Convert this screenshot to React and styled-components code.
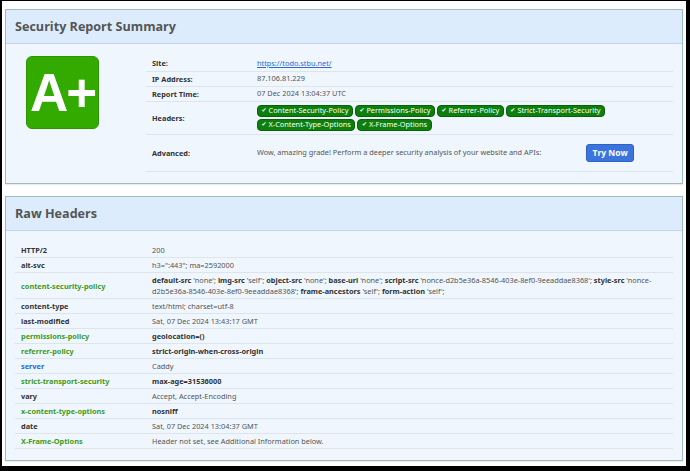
import React from 'react';
import styled, { createGlobalStyle } from 'styled-components';

const GlobalStyle = createGlobalStyle`
  html, body {
    margin: 0;
    padding: 0;
    background: #000;
  }
  * { box-sizing: border-box; }
`;

const Frame = styled.div`
  width: 690px;
  height: 471px;
  background: #fff;
  border-style: solid;
  border-color: #000;
  border-width: 1px 4px 5px 2px;
  padding: 8px 3px 0 3px;
  font-family: "Noto Sans", "Open Sans", sans-serif;
  font-size: 7.35px;
  color: #555;
  overflow: hidden;
`;

const Panel = styled.section`
  border: 1px solid #9fbdbd;
  background: #eff6fe;
  box-shadow: 0 1px 1px rgba(0, 0, 0, 0.08);
  margin-bottom: ${p => p.gap || 0}px;
`;

const PanelHead = styled.div`
  height: 34px;
  background: #dcecfc;
  border-bottom: 1px solid #c2d6e6;
  display: flex;
  align-items: center;
  padding-left: 9px;
`;

const Title = styled.h2`
  margin: 0;
  font-family: "Open Sans", "Noto Sans", sans-serif;
  font-size: 12.6px;
  font-weight: 700;
  color: #555;
`;

const PanelBody = styled.div`
  display: flex;
  padding: 12px 9px 11px 9px;
`;

const GradeCol = styled.div`
  width: 131px;
  flex: none;
  padding-left: 11px;
`;

const Grade = styled.div`
  width: 73px;
  height: 73px;
  border-radius: 6px;
  background: #33aa00;
  border: 1px solid #2c9600;
  color: #fff;
  font-family: "Liberation Sans", Arial, sans-serif;
  font-weight: 700;
  font-size: 53px;
  display: flex;
  align-items: center;
  justify-content: center;
  letter-spacing: -2px;
  padding-bottom: 1px;
`;

const Table = styled.table`
  flex: 1;
  border-collapse: collapse;
  width: 100%;
`;

const Row = styled.tr`
  border-bottom: 1px solid #dde5eb;
`;

const Label = styled.td`
  width: ${p => p.w}px;
  padding: 0 5px 0 6px;
  height: ${p => p.h || 15}px;
  font-weight: 700;
  color: ${p => p.tone === 'green' ? '#3f9b1c' : p.tone === 'blue' ? '#1d68e0' : '#333'};
  vertical-align: middle;
  white-space: nowrap;
`;

const Value = styled.td`
  padding: ${p => p.pad || '0 5px'};
  height: ${p => p.h || 15}px;
  vertical-align: middle;
  line-height: 10.5px;
  color: ${p => p.strong ? '#333' : '#555'};
  font-weight: ${p => p.strong ? 700 : 400};
`;

const Link = styled.a`
  color: #2a6ad8;
  text-decoration: underline;
`;

const Badges = styled.div`
  display: flex;
  flex-wrap: wrap;
  gap: 2px;
`;

const Badge = styled.span`
  display: inline-flex;
  align-items: center;
  height: 12px;
  padding: 0 3.5px;
  background: #0c7f0c;
  border: 1px solid #086308;
  border-radius: 4px;
  color: #fff;
  gap: 2px;
`;

const Check = styled.span`
  font-family: "DejaVu Sans", sans-serif;
  font-size: 6px;
`;

const Advanced = styled.div`
  display: flex;
  align-items: center;
`;

const Button = styled.button`
  margin-left: 45px;
  width: 48px;
  height: 18px;
  border: 1px solid #2d63c4;
  border-radius: 3px;
  background: #3a74dc;
  color: #fff;
  font-family: "Open Sans", "Noto Sans", sans-serif;
  font-weight: 700;
  font-size: 8.5px;
  padding: 0;
`;

const B = styled.b`
  color: #333;
`;

const badges = [
  'Content-Security-Policy',
  'Permissions-Policy',
  'Referrer-Policy',
  'Strict-Transport-Security',
  'X-Content-Type-Options',
  'X-Frame-Options',
];

const nonce = "'nonce-d2b5e36a-8546-403e-8ef0-9eeaddae8368'";

const csp = [
  ['default-src', "'none'"],
  ['img-src', "'self'"],
  ['object-src', "'none'"],
  ['base-uri', "'none'"],
  ['script-src', nonce],
  ['style-src', nonce],
  ['frame-ancestors', "'self'"],
  ['form-action', "'self'"],
];

const raw = [
  { k: 'HTTP/2', v: '200' },
  { k: 'alt-svc', v: 'h3=":443"; ma=2592000' },
  { k: 'content-security-policy', tone: 'green', csp: true },
  { k: 'content-type', v: 'text/html; charset=utf-8' },
  { k: 'last-modified', v: 'Sat, 07 Dec 2024 13:43:17 GMT' },
  { k: 'permissions-policy', tone: 'green', v: 'geolocation=()', strong: true },
  { k: 'referrer-policy', tone: 'green', v: 'strict-origin-when-cross-origin', strong: true },
  { k: 'server', tone: 'blue', v: 'Caddy' },
  { k: 'strict-transport-security', tone: 'green', v: 'max-age=31536000', strong: true },
  { k: 'vary', v: 'Accept, Accept-Encoding' },
  { k: 'x-content-type-options', tone: 'green', v: 'nosniff', strong: true },
  { k: 'date', v: 'Sat, 07 Dec 2024 13:04:37 GMT' },
  { k: 'X-Frame-Options', tone: 'green', v: 'Header not set, see Additional Information below.' },
];

export default function App() {
  return (
    <Frame>
      <GlobalStyle />
      <Panel gap={12}>
        <PanelHead>
          <Title>Security Report Summary</Title>
        </PanelHead>
        <PanelBody>
          <GradeCol>
            <Grade>A+</Grade>
          </GradeCol>
          <Table>
            <tbody>
              <Row>
                <Label w={106}>Site:</Label>
                <Value><Link href="#">https://todo.stbu.net/</Link></Value>
              </Row>
              <Row>
                <Label w={106}>IP Address:</Label>
                <Value>87.106.81.229</Value>
              </Row>
              <Row>
                <Label w={106}>Report Time:</Label>
                <Value>07 Dec 2024 13:04:37 UTC</Value>
              </Row>
              <Row>
                <Label w={106} h={32}>Headers:</Label>
                <Value h={32} pad="3px 5px">
                  <Badges>
                    {badges.map(b => (
                      <Badge key={b}><Check>✔</Check>{b}</Badge>
                    ))}
                  </Badges>
                </Value>
              </Row>
              <Row>
                <Label w={106} h={37}>Advanced:</Label>
                <Value h={37}>
                  <Advanced>
                    <span>Wow, amazing grade! Perform a deeper security analysis of your website and APIs:</span>
                    <Button>Try Now</Button>
                  </Advanced>
                </Value>
              </Row>
            </tbody>
          </Table>
        </PanelBody>
      </Panel>
      <Panel>
        <PanelHead>
          <Title>Raw Headers</Title>
        </PanelHead>
        <PanelBody>
          <Table>
            <tbody>
              {raw.map(r => (
                <Row key={r.k}>
                  <Label w={132} tone={r.tone} h={r.csp ? 26 : 15}>{r.k}</Label>
                  {r.csp ? (
                    <Value h={26}>
                      {csp.map(([d, v]) => (
                        <React.Fragment key={d}><B>{d}</B> {v}; </React.Fragment>
                      ))}
                    </Value>
                  ) : (
                    <Value strong={r.strong}>{r.v}</Value>
                  )}
                </Row>
              ))}
            </tbody>
          </Table>
        </PanelBody>
      </Panel>
    </Frame>
  );
}
